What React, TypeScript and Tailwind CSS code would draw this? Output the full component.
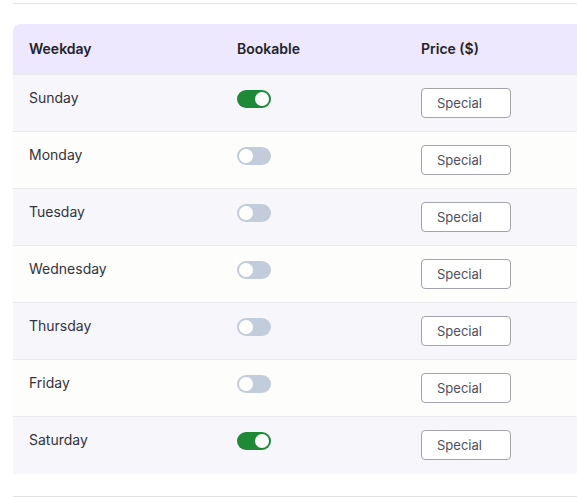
import React from 'react'

type DayRow = {
  day: string
  bookable: boolean
}

const days: DayRow[] = [
  { day: 'Sunday', bookable: true },
  { day: 'Monday', bookable: false },
  { day: 'Tuesday', bookable: false },
  { day: 'Wednesday', bookable: false },
  { day: 'Thursday', bookable: false },
  { day: 'Friday', bookable: false },
  { day: 'Saturday', bookable: true },
]

const Toggle = ({ on }: { on: boolean }) => (
  <div
    className={
      on
        ? 'w-[34px] h-[18px] rounded-full bg-[#1e8a38] flex items-center justify-end px-[2px]'
        : 'w-[34px] h-[18px] rounded-full bg-[#c2ccda] flex items-center justify-start px-[2px]'
    }
  >
    <div className="w-[14px] h-[14px] rounded-full bg-white" />
  </div>
)

const App: React.FC = () => {
  return (
    <div className="w-[577px] h-[497px] bg-white font-['Inter',sans-serif] text-[#2b2b33] overflow-hidden">
      <div className="ml-[13px] mt-[3px] border-t border-[#e2e2e6]" />

      <div className="ml-[13px] mt-[20px] rounded-tl-lg overflow-hidden shadow-[0_1px_2px_rgba(0,0,0,0.04)]">
        {/* Header */}
        <div className="grid grid-cols-[208px_184px_1fr] h-[50px] items-center bg-[#ede8fd] pl-4 text-sm font-semibold text-[#23232b]">
          <div>Weekday</div>
          <div>Bookable</div>
          <div>Price ($)</div>
        </div>

        {/* Rows */}
        {days.map((row, i) => (
          <div
            key={row.day}
            className={
              i % 2 === 0
                ? 'grid grid-cols-[208px_184px_1fr] h-[57px] pt-[14px] pl-4 bg-[#f7f6fb] border-t border-[#ebebee]'
                : 'grid grid-cols-[208px_184px_1fr] h-[57px] pt-[14px] pl-4 bg-[#fdfdfb] border-t border-[#ebebee]'
            }
          >
            <div className="text-sm leading-5 mt-[-1px] text-[#33333b]">{row.day}</div>
            <div className="pt-[1px]">
              <Toggle on={row.bookable} />
            </div>
            <div className="-mt-[1px]">
              <input
                className="w-[90px] h-[30px] rounded border border-[#a3a3ab] bg-white px-[15px] text-[13px] placeholder:text-[#4f4f5c] outline-none"
                placeholder="Special"
              />
            </div>
          </div>
        ))}
      </div>

      <div className="ml-[13px] mt-[23px] border-t border-[#e2e2e6]" />
    </div>
  )
}

export default App
